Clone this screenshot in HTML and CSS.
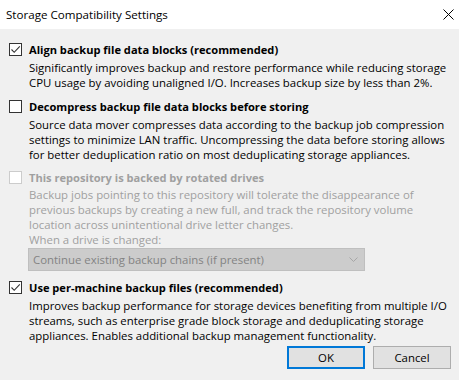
FILE: index.html
```html
<!DOCTYPE html>
<html>
<head>
<meta charset="utf-8">
<link rel="stylesheet" href="styles.css">
</head>
<body>
<div class="window">
  <div class="titlebar">
    <span class="title">Storage Compatibility Settings</span>
    <svg class="close" width="11" height="11" viewBox="0 0 11 11"><path d="M0.5 0.5 L10.5 10.5 M10.5 0.5 L0.5 10.5" stroke="#000" stroke-width="1" fill="none"/></svg>
  </div>
  <div class="content">
    <div class="option opt1">
      <div class="row">
        <span class="box"><svg width="11" height="11" viewBox="0 0 11 11"><path d="M1.5 5.5 L4.2 8.3 L9.8 2.3" stroke="#333" stroke-width="1.1" fill="none"/></svg></span>
        <span class="label">Align backup file data blocks (recommended)</span>
      </div>
      <p class="desc">Significantly improves backup and restore performance while reducing storage CPU usage by avoiding unaligned I/O. Increases backup size by less than 2%.</p>
    </div>
    <div class="option opt2">
      <div class="row">
        <span class="box"></span>
        <span class="label">Decompress backup file data blocks before storing</span>
      </div>
      <p class="desc">Source data mover compresses data according to the backup job compression settings to minimize LAN traffic. Uncompressing the data before storing allows for better deduplication ratio on most deduplicating storage appliances.</p>
    </div>
    <div class="option opt3 disabled">
      <div class="row">
        <span class="box"></span>
        <span class="label">This repository is backed by rotated drives</span>
      </div>
      <p class="desc">Backup jobs pointing to this repository will tolerate the disappearance of previous backups by creating a new full, and track the repository volume location across unintentional drive letter changes.<br>When a drive is changed:</p>
      <div class="combo">
        <span>Continue existing backup chains (if present)</span>
        <svg width="9" height="5" viewBox="0 0 9 5"><path d="M0.5 0.5 L4.5 4.5 L8.5 0.5" stroke="#a6a6a6" stroke-width="1" fill="none"/></svg>
      </div>
    </div>
    <div class="option opt4">
      <div class="row">
        <span class="box"><svg width="11" height="11" viewBox="0 0 11 11"><path d="M1.5 5.5 L4.2 8.3 L9.8 2.3" stroke="#333" stroke-width="1.1" fill="none"/></svg></span>
        <span class="label">Use per-machine backup files (recommended)</span>
      </div>
      <p class="desc">Improves backup performance for storage devices benefiting from multiple I/O streams, such as enterprise grade block storage and deduplicating storage appliances. Enables additional backup management functionality.</p>
    </div>
    <div class="buttons">
      <button class="btn default">OK</button>
      <button class="btn">Cancel</button>
    </div>
  </div>
</div>
</body>
</html>
```
FILE: styles.css
```css
* { box-sizing: border-box; }
html, body { margin: 0; padding: 0; }
body {
  width: 459px;
  height: 380px;
  overflow: hidden;
  font-family: "Open Sans", "Noto Sans", sans-serif;
  font-size: 11.4px;
  color: #000;
  background: #f0f0f0;
}
.window {
  width: 459px;
  height: 380px;
  display: flex;
  flex-direction: column;
}
.titlebar {
  height: 29px;
  background: #fff;
  display: flex;
  align-items: center;
  justify-content: space-between;
  padding: 0 5px 1px 6px;
}
.title { font-size: 11.6px; }
.content {
  flex: 1;
  background: #f0f0f0;
  padding: 13px 8px 0 9px;
  display: flex;
  flex-direction: column;
}
.option { display: flex; flex-direction: column; }
.row {
  display: flex;
  align-items: center;
  height: 15px;
  line-height: 15px;
}
.box {
  width: 13px;
  height: 13px;
  border: 1px solid #333;
  background: #fff;
  display: flex;
  align-items: center;
  justify-content: center;
  margin-right: 7px;
  flex: none;
}
.label { font-weight: 700; font-size: 11.1px; }
.desc {
  margin: 3px 0 0 20px;
  line-height: 15px;
}
.opt2 { margin-top: 9px; }
.opt3 { margin-top: 8px; }
.opt3 .desc { margin-top: 2px; }
.opt4 { margin-top: 9px; }
.disabled { color: #a0a0a0; }
.disabled .box { border-color: #cccccc; }
.combo {
  margin: 1px 0 0 19px;
  width: 337px;
  height: 23px;
  background: #cccccc;
  border: 1px solid #bfbfbf;
  color: #838383;
  display: flex;
  align-items: center;
  justify-content: space-between;
  padding: 0 6px 0 4px;
}
.buttons {
  display: flex;
  justify-content: flex-end;
  gap: 8px;
  margin-top: 3px;
}
.btn {
  width: 78px;
  height: 23px;
  font-family: inherit;
  font-size: 11.4px;
  background: #e1e1e1;
  border: 1px solid #adadad;
  padding: 0;
  color: #000;
}
.btn.default { border: 2px solid #0078d7; }
```
